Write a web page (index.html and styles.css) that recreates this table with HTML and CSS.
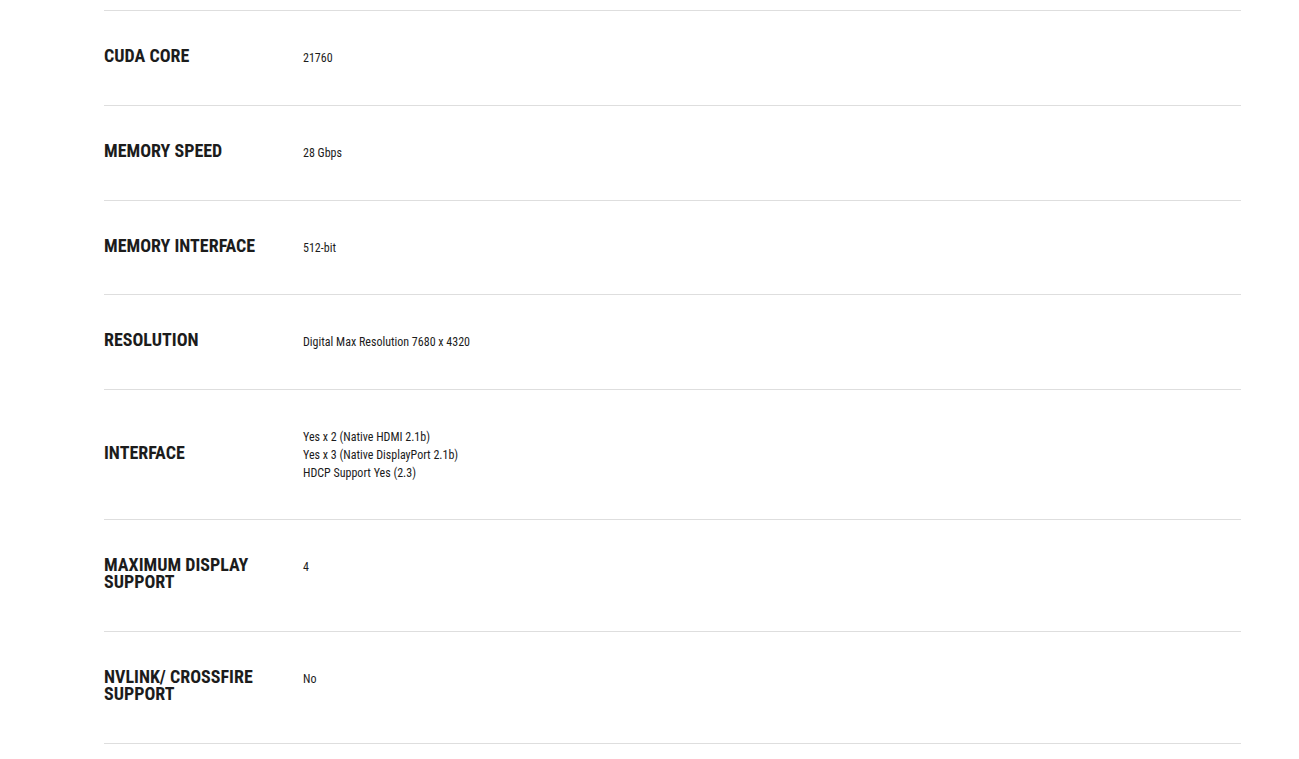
FILE: index.html
```html
<!DOCTYPE html>
<html>
<head>
<meta charset="utf-8">
<link rel="stylesheet" href="styles.css">
</head>
<body>
<div class="specs">
  <div class="row"><div class="label">CUDA CORE</div><div class="value">21760</div></div>
  <div class="row"><div class="label">MEMORY SPEED</div><div class="value">28 Gbps</div></div>
  <div class="row"><div class="label">MEMORY INTERFACE</div><div class="value">512-bit</div></div>
  <div class="row"><div class="label">RESOLUTION</div><div class="value">Digital Max Resolution 7680 x 4320</div></div>
  <div class="row"><div class="label">INTERFACE</div><div class="value">Yes x 2 (Native HDMI 2.1b)<br>Yes x 3 (Native DisplayPort 2.1b)<br>HDCP Support Yes (2.3)</div></div>
  <div class="row"><div class="label">MAXIMUM DISPLAY SUPPORT</div><div class="value">4</div></div>
  <div class="row"><div class="label">NVLINK/ CROSSFIRE SUPPORT</div><div class="value">No</div></div>
</div>
</body>
</html>
```
FILE: styles.css
```css
html, body {
  margin: 0;
  padding: 0;
  background: #fff;
}
body {
  font-family: "Roboto Condensed", Roboto, "Liberation Sans", sans-serif;
  font-stretch: condensed;
  color: #1c1c1c;
}
.specs {
  margin: 10px 58px 0 104px;
  border-top: 1px solid #dedede;
}
.row {
  display: grid;
  grid-template-columns: 199px 1fr;
  padding: 38px 0;
  border-bottom: 1px solid #dedede;
}
.label {
  align-self: center;
  font-size: 18px;
  font-weight: 700;
  line-height: 17.25px;
  margin-top: -2px;
  padding: 0 40px 2.5px 0;
}
.value {
  align-self: start;
  font-size: 12px;
  line-height: 18px;
  margin-bottom: -1px;
}
```
